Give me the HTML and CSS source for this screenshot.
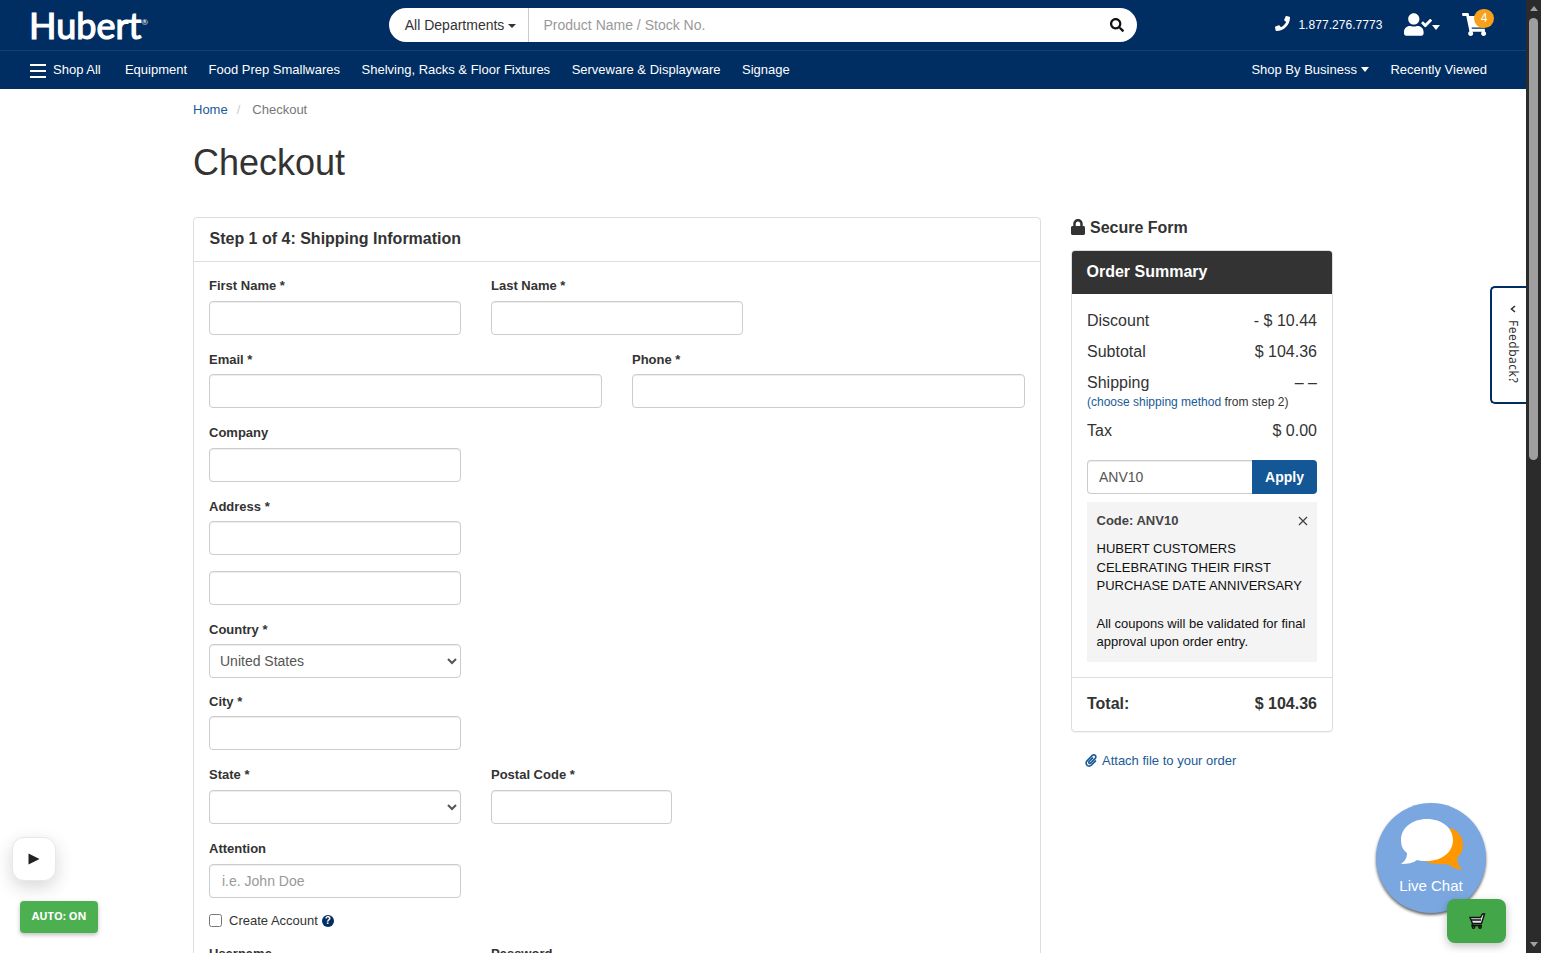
FILE: index.html
```html
<!DOCTYPE html>
<html lang="en">
<head>
    <meta charset="UTF-8">
    <meta name="viewport" content="width=device-width, initial-scale=1.0">
    <title>Checkout | Hubert</title>
    <link rel="stylesheet" href="styles.css">
</head>
<body>
    <div class="page">
        <header>
            <div class="top-bar">
                <a class="logo" href="#">Hubert<sup>®</sup></a>
                <form class="search">
                    <button type="button" class="departments">All Departments <i class="caret"></i></button>
                    <input type="text" placeholder="Product Name / Stock No.">
                    <button type="button" class="search-btn">
                        <svg viewBox="0 0 512 512" width="14" height="14"><path d="M505 442.7L405.3 343c-4.5-4.5-10.6-7-17-7H372c27.6-35.3 44-79.7 44-128C416 93.1 322.9 0 208 0S0 93.1 0 208s93.1 208 208 208c48.3 0 92.7-16.4 128-44v16.3c0 6.4 2.5 12.5 7 17l99.7 99.7c9.4 9.4 24.6 9.4 33.9 0l28.3-28.3c9.4-9.4 9.4-24.6.1-34zM208 336c-70.7 0-128-57.2-128-128 0-70.7 57.2-128 128-128 70.7 0 128 57.2 128 128 0 70.7-57.2 128-128 128z"/></svg>
                    </button>
                </form>
                <div class="tools">
                    <a class="phone" href="#">
                        <svg viewBox="0 0 512 512" width="15" height="15"><path d="M493.4 24.6l-104-24c-11.3-2.6-22.9 3.3-27.5 13.9l-48 112c-4.2 9.8-1.4 21.3 6.9 28l60.6 49.6c-36 76.7-98.9 140.5-177.2 177.2l-49.6-60.6c-6.8-8.3-18.2-11.1-28-6.9l-112 48C3.9 366.5-2 378.1.6 389.4l24 104C27.1 504.2 36.7 512 48 512c256.1 0 464-207.5 464-464 0-11.2-7.7-20.9-18.6-23.4z"/></svg>
                        <span>1.877.276.7773</span>
                    </a>
                    <a class="account" href="#">
                        <svg viewBox="0 0 640 512" width="28" height="23"><path d="M224 256c70.7 0 128-57.3 128-128S294.7 0 224 0 96 57.3 96 128s57.3 128 128 128zm89.6 32h-16.7c-22.2 10.2-46.9 16-72.9 16s-50.6-5.8-72.9-16h-16.7C60.2 288 0 348.2 0 422.4V464c0 26.5 21.5 48 48 48h352c26.5 0 48-21.5 48-48v-41.6c0-74.2-60.2-134.4-134.4-134.4zm323-128.4l-27.8-28.1c-4.6-4.7-12.1-4.7-16.8-.1l-104.8 104-45.5-45.8c-4.6-4.7-12.1-4.7-16.8-.1l-28.1 27.9c-4.7 4.6-4.7 12.1-.1 16.8l81.7 82.3c4.6 4.7 12.1 4.7 16.8.1l141.3-140.2c4.6-4.7 4.7-12.2.1-16.8z"/></svg>
                        <i class="caret"></i>
                    </a>
                    <a class="cart" href="#">
                        <svg viewBox="0 0 576 512" width="26" height="23"><path d="M528.12 301.319l47.273-208C578.806 78.301 567.391 64 551.99 64H159.208l-9.166-44.81C147.758 8.021 137.93 0 126.529 0H24C10.745 0 0 10.745 0 24v16c0 13.255 10.745 24 24 24h69.883l70.248 343.435C147.325 417.1 136 435.222 136 456c0 30.928 25.072 56 56 56s56-25.072 56-56c0-15.674-6.447-29.835-16.824-40h209.647C430.447 426.165 424 440.326 424 456c0 30.928 25.072 56 56 56s56-25.072 56-56c0-22.172-12.888-41.332-31.579-50.405l5.517-24.276c3.413-15.018-8.002-29.319-23.403-29.319H218.117l-6.545-32h293.145c11.206 0 20.92-7.754 23.403-18.681z"/></svg>
                        <span class="badge">4</span>
                    </a>
                </div>
            </div>
            <nav>
                <a class="shop-all" href="#"><span class="bars"><i></i><i></i><i></i></span>Shop All</a>
                <a href="#">Equipment</a>
                <a href="#">Food Prep Smallwares</a>
                <a href="#">Shelving, Racks &amp; Floor Fixtures</a>
                <a href="#">Serveware &amp; Displayware</a>
                <a href="#">Signage</a>
                <a class="business" href="#">Shop By Business<i class="caret"></i></a>
                <a href="#">Recently Viewed</a>
            </nav>
        </header>

        <main class="container">
            <div class="breadcrumb"><a href="#">Home</a><span class="slash">/</span><span>Checkout</span></div>
            <h1>Checkout</h1>

            <div class="columns">
                <section class="panel">
                    <h2>Step 1 of 4: Shipping Information</h2>
                    <form class="shipping">
                        <div class="row">
                            <div class="field"><label for="first">First Name *</label><input type="text" id="first"></div>
                            <div class="field"><label for="last">Last Name *</label><input type="text" id="last"></div>
                        </div>
                        <div class="row">
                            <div class="field wide"><label for="email">Email *</label><input type="text" id="email"></div>
                            <div class="field wide"><label for="phone">Phone *</label><input type="text" id="phone"></div>
                        </div>
                        <div class="row">
                            <div class="field"><label for="company">Company</label><input type="text" id="company"></div>
                        </div>
                        <div class="row">
                            <div class="field"><label for="address">Address *</label><input type="text" id="address"></div>
                        </div>
                        <div class="row address-2">
                            <div class="field"><input type="text"></div>
                        </div>
                        <div class="row country">
                            <div class="field"><label for="country">Country *</label><select id="country"><option>United States</option></select></div>
                        </div>
                        <div class="row">
                            <div class="field"><label for="city">City *</label><input type="text" id="city"></div>
                        </div>
                        <div class="row state">
                            <div class="field"><label for="state">State *</label><select id="state"><option></option></select></div>
                            <div class="field small"><label for="postal">Postal Code *</label><input type="text" id="postal"></div>
                        </div>
                        <div class="row">
                            <div class="field"><label for="attention">Attention</label><input type="text" id="attention" placeholder="i.e. John Doe"></div>
                        </div>
                        <div class="create"><input type="checkbox" id="create"><label for="create">Create Account</label><span class="help">?</span></div>
                        <div class="row">
                            <div class="field"><label for="username">Username</label><input type="text" id="username"></div>
                            <div class="field"><label for="password">Password</label><input type="password" id="password"></div>
                        </div>
                    </form>
                </section>

                <aside>
                    <div class="secure">
                        <svg viewBox="0 0 448 512" width="14" height="16"><path d="M400 224h-24v-72C376 68.2 307.8 0 224 0S72 68.2 72 152v72H48c-26.5 0-48 21.5-48 48v192c0 26.5 21.5 48 48 48h352c26.5 0 48-21.5 48-48V272c0-26.5-21.5-48-48-48zm-104 0H152v-72c0-39.7 32.3-72 72-72s72 32.3 72 72v72z"/></svg>
                        Secure Form
                    </div>
                    <div class="summary">
                        <h3>Order Summary</h3>
                        <div class="summary-body">
                            <div class="line"><span>Discount</span><span>- $ 10.44</span></div>
                            <div class="line"><span>Subtotal</span><span>$ 104.36</span></div>
                            <div class="line shipping-line"><span>Shipping</span><span>– –</span></div>
                            <p class="choose"><a href="#">(choose shipping method</a> from step 2)</p>
                            <div class="line"><span>Tax</span><span>$ 0.00</span></div>
                            <div class="coupon"><input type="text" value="ANV10"><button type="button">Apply</button></div>
                            <div class="code">
                                <div class="code-title"><span>Code: ANV10</span>
                                    <svg viewBox="0 0 10 10" width="10" height="10"><path d="M1 1l8 8M9 1l-8 8"/></svg>
                                </div>
                                <p class="promo">HUBERT CUSTOMERS<br>CELEBRATING THEIR FIRST<br>PURCHASE DATE ANNIVERSARY</p>
                                <p>All coupons will be validated for final<br>approval upon order entry.</p>
                            </div>
                        </div>
                        <div class="total"><span>Total:</span><span>$ 104.36</span></div>
                    </div>
                    <a class="attach" href="#">
                        <svg viewBox="0 0 448 512" width="12" height="13"><path d="M43.246 466.142c-58.43-60.289-57.341-157.511 1.386-217.581L254.392 34c44.316-45.332 116.351-45.336 160.671 0 43.89 44.894 43.943 117.329 0 162.276L232.214 383.128c-29.855 30.537-78.633 30.111-107.982-.998-28.275-29.97-27.368-77.473 1.452-106.953l143.743-146.835c6.182-6.314 16.312-6.422 22.626-.241l22.861 22.379c6.315 6.182 6.422 16.312.241 22.626L171.427 319.927c-4.932 5.045-5.236 13.428-.648 18.292 4.372 4.634 11.245 4.711 15.688.165l182.849-186.851c19.613-20.062 19.613-52.725-.011-72.798-19.189-19.627-49.957-19.637-69.154 0L90.39 293.295c-34.763 35.56-35.299 93.12-1.191 128.313 34.01 35.093 88.985 35.137 123.058.286l172.06-175.999c6.177-6.319 16.307-6.433 22.626-.256l22.877 22.364c6.319 6.177 6.434 16.307.256 22.626l-172.06 175.998c-59.576 60.938-155.943 60.216-214.77-.485z"/></svg>
                        Attach file to your order
                    </a>
                </aside>
            </div>
        </main>
    </div>

    <div class="scrollbar">
        <i class="arrow up"></i>
        <div class="thumb"></div>
        <i class="arrow down"></i>
    </div>

    <!-- floating widgets -->
    <div class="feedback">
        <svg viewBox="0 0 8 6" width="8" height="6"><path d="M1 1l3 3.5L7 1"/></svg>
        <span>Feedback?</span>
    </div>
    <button class="play"><svg viewBox="0 0 12 12" width="12" height="12"><path d="M.5.5v11L11.500 6z"/></svg></button>
    <button class="auto">AUTO: ON</button>
    <div class="chat">
        <svg viewBox="0 0 64 54" width="64" height="54">
            <path fill="#ff9800" d="M51 10c7 3 12 9 12 17 0 6-3 10-6 13 0 4 2 8 5 12-6-1-11-3-14-6-10 1-19 0-25-4z"/>
            <path fill="#fff" d="M27 1c15 0 26 9 26 21S42 43 27 43c-4 0-7 0-10-1-4 3-9 4-16 4 4-3 6-6 6-11C3 32 1 28 1 22 1 10 12 1 27 1z"/>
        </svg>
        <span>Live Chat</span>
    </div>
    <button class="cart-btn">
        <svg viewBox="0 0 18 18" width="18" height="18">
            <path d="M2 5.500h10.500l2-3.500h2L13.500 11.500H4.500z" fill="#e6e6e6"/>
            <path d="M3 8h10M4.500 11.500l-.5 2h10"/>
            <circle cx="5.500" cy="15" r="1.200"/><circle cx="12" cy="15" r="1.200"/>
        </svg>
    </button>
</body>
</html>
```
FILE: styles.css
```css
* {
    box-sizing: border-box;
}
body {
    font-family: "Liberation Sans", Arial, sans-serif;
    font-size: 13px;
    line-height: 18.5px;
    color: #333;
    background: #fff;
    display: flex;
    height: 953px;
    margin: 0;
    overflow: hidden;
    position: relative;
}
a {
    color: #1a5a96;
    text-decoration: none;
}
button, input, select {
    font-family: inherit;
}
h1, h2, h3, p {
    margin: 0;
}
svg {
    display: block;
    fill: currentColor;
    flex-shrink: 0;
}
.page {
    width: 1526px;
    height: 953px;
    overflow: hidden;
}
.caret {
    display: inline-block;
    border: 4px solid transparent;
    border-top-color: currentColor;
    border-bottom: 0;
}

/* header */
header {
    background: #002d62;
    height: 89px;
}
header a {
    color: #fff;
}
.top-bar {
    display: flex;
    align-items: center;
    height: 51px;
    padding: 0 32px 1px 29px;
    border-bottom: 1px solid #14406f;
}
.logo {
    width: 360px;
    font-family: Lato, sans-serif;
    font-size: 36px;
    line-height: 48px;
    padding-top: 1px;
    -webkit-text-stroke: 1.2px #fff;
}
.logo sup {
    font-size: 8px;
    line-height: 0;
    vertical-align: 14px;
    -webkit-text-stroke: 0;
}
.search {
    display: flex;
    width: 748px;
    height: 34px;
    background: #fff;
    border-radius: 17px;
    overflow: hidden;
}
.search button, .search input {
    border: 0;
    background: none;
    font-size: 14px;
}
.search .departments {
    width: 140px;
    padding: 0 0 0 4px;
    color: #333;
    border-right: 1px solid #ccc;
    white-space: nowrap;
}
.departments .caret {
    vertical-align: 2px;
}
.search input {
    flex: 1;
    padding: 0 14px 0 14.5px;
}
.search .search-btn {
    width: 40px;
    padding: 0 13px;
    color: #111;
}
::placeholder {
    color: #999;
    opacity: 1;
}
.tools {
    display: flex;
    align-items: center;
    margin-left: auto;
}
.phone {
    display: flex;
    gap: 8.5px;
    margin-right: 21.5px;
    font-size: 12px;
    letter-spacing: 0.05px;
}
.phone span {
    line-height: 18px;
}
.account {
    display: flex;
    align-items: center;
    margin-right: 22px;
}
.account .caret {
    border-width: 5px 4.500px 0;
    margin: 5px 0 0;
}
.cart {
    position: relative;
    width: 32px;
}
.badge {
    position: absolute;
    top: -4px;
    left: 12px;
    width: 20px;
    height: 19px;
    border-radius: 10px;
    background: #f9a01b;
    font-size: 12px;
    line-height: 18px;
    text-align: center;
}
nav {
    display: flex;
    align-items: center;
    gap: 21.5px;
    height: 38px;
    padding: 0 39px 0 30px;
}
.shop-all {
    display: flex;
    align-items: center;
    gap: 7px;
    margin-right: 2.7px;
}
.bars {
    display: flex;
    flex-direction: column;
    gap: 4px;
    width: 16px;
    margin-top: 1px;
}
.bars i {
    height: 2px;
    background: #fff;
}
.business {
    margin-left: auto;
}
.business .caret {
    margin-left: 4px;
    vertical-align: 2px;
    border-top-width: 5px;
}

/* content */
.container {
    width: 1140px;
    margin: 0 0 0 193px;
}
.breadcrumb {
    padding-top: 12px;
    color: #777;
}
.slash {
    padding: 0 12px 0 9px;
    color: #ccc;
}
h1 {
    margin-top: 23px;
    font-size: 36px;
    font-weight: normal;
    line-height: 40px;
}
.columns {
    display: flex;
    gap: 30px;
    margin-top: 34px;
}
.panel {
    width: 848px;
    border: 1px solid #ddd;
    border-radius: 4px 4px 0 0;
}
.panel h2 {
    height: 44px;
    padding: 0 16px 0 15.5px;
    border-bottom: 1px solid #ddd;
    font-size: 16px;
    line-height: 42px;
}
.shipping {
    padding: 15.9px 15px 0;
}
.row {
    display: flex;
    gap: 30px;
    margin-bottom: 16px;
}
.address-2 {
    margin-bottom: 15.2px;
}
.country {
    margin-bottom: 14.7px;
}
.state {
    margin-bottom: 16.3px;
}
.field {
    width: 252px;
}
.wide {
    width: 393px;
}
.small {
    width: 181px;
}
.field label {
    display: block;
    height: 18px;
    line-height: 18px;
    margin-bottom: 5.5px;
    font-weight: bold;
}
.field input, .field select, .coupon input {
    display: block;
    width: 100%;
    height: 34px;
    padding: 0 12px;
    border: 1px solid #ccc;
    border-radius: 4px;
    background: #fff;
    color: #555;
    font-size: 14px;
    box-shadow: inset 0 1px 1px rgba(0, 0, 0, 0.075);
}
.field select {
    padding: 0 0 0 6px;
}
.create {
    display: flex;
    align-items: center;
    height: 18px;
    margin: -2px 0 15.5px;
}
.create input {
    width: 13px;
    height: 13px;
    margin: 0 7px 0 0;
}
.create label {
    padding-top: 1px;
}
.help {
    width: 12px;
    height: 12px;
    margin-left: 4px;
    border-radius: 50%;
    background: #002d62;
    color: #fff;
    font-size: 10px;
    font-weight: bold;
    line-height: 12px;
    text-align: center;
}

/* order summary */
aside {
    width: 262px;
}
.secure {
    display: flex;
    gap: 5px;
    height: 33px;
    padding-top: 2px;
    font-size: 16px;
    font-weight: bold;
}
.summary {
    border: 1px solid #ddd;
    border-radius: 4px;
    box-shadow: 0 1px 1px rgba(0, 0, 0, 0.05);
}
.summary h3 {
    height: 43px;
    padding-left: 14.5px;
    border-radius: 3px 3px 0 0;
    background: #333;
    color: #fff;
    font-size: 16px;
    line-height: 41px;
}
.summary-body {
    padding: 15px;
}
.line {
    display: flex;
    justify-content: space-between;
    height: 23px;
    margin-bottom: 8px;
    font-size: 16px;
    line-height: 23px;
}
.shipping-line {
    margin-bottom: 0;
}
.choose {
    margin: 0 0 8px;
    font-size: 12px;
    line-height: 17px;
}
.coupon {
    display: flex;
    margin: 18px 0 8px;
}
.coupon input {
    flex: 1;
    min-width: 0;
    padding-left: 11px;
    border-right: 0;
    border-radius: 4px 0 0 4px;
}
.coupon button {
    width: 65px;
    border: 0;
    border-radius: 0 4px 4px 0;
    background: #135797;
    color: #fff;
    font-size: 14px;
    font-weight: bold;
}
.code {
    height: 160px;
    padding: 10px 9px 0 9.5px;
    background: #f4f4f4;
    color: #111;
    line-height: 18.57px;
}
.code p {
    white-space: nowrap;
}
.code-title {
    display: flex;
    align-items: center;
    justify-content: space-between;
    margin-bottom: 10.3px;
    color: #444;
    font-weight: bold;
}
.code-title svg {
    fill: none;
    stroke: #444;
    stroke-width: 1.3;
}
.code .promo {
    margin-bottom: 18.7px;
}
.total {
    display: flex;
    justify-content: space-between;
    height: 54px;
    padding: 0 15px;
    border-top: 1px solid #ddd;
    font-size: 16px;
    font-weight: bold;
    line-height: 51px;
}
.attach {
    display: flex;
    align-items: center;
    gap: 5px;
    margin: 20px 0 0 14px;
}

/* scrollbar */
.scrollbar {
    display: flex;
    flex-direction: column;
    align-items: center;
    width: 15px;
    height: 953px;
    padding: 6px 0;
    background: #2b2b2b;
}
.arrow {
    border: 4px solid transparent;
}
.up {
    border-top: 0;
    border-bottom: 5px solid #a0a0a0;
}
.down {
    margin-top: auto;
    border-bottom: 0;
    border-top: 5px solid #a0a0a0;
}
.thumb {
    width: 9px;
    height: 442px;
    margin-top: 7px;
    border-radius: 5px;
    background: #9f9f9f;
}

/* floating widgets */
.feedback {
    position: absolute;
    top: 286px;
    left: 1490px;
    display: flex;
    flex-direction: column;
    align-items: center;
    width: 36px;
    height: 118px;
    padding: 18px 0 0 7px;
    border: 2px solid #002d62;
    border-right: 0;
    border-radius: 5px 0 0 5px;
    background: #fff;
}
.feedback svg {
    fill: none;
    stroke: #333;
    stroke-width: 1.6;
    transform: rotate(90deg);
}
.feedback span {
    margin-top: 8px;
    writing-mode: vertical-rl;
    font-family: "Noto Sans", sans-serif;
    font-size: 12px;
    letter-spacing: 0.5px;
}
.play {
    position: absolute;
    top: 837px;
    left: 12px;
    display: flex;
    align-items: center;
    justify-content: center;
    width: 44px;
    height: 44px;
    padding: 0;
    border: 1px solid #e8e8e8;
    border-radius: 12px;
    background: #fff;
    color: #222;
    box-shadow: 0 6px 18px rgba(0, 0, 0, 0.16);
}
.auto {
    position: absolute;
    top: 901px;
    left: 20px;
    width: 78px;
    height: 32px;
    padding: 0 0 3px;
    border: 0;
    border-radius: 4px;
    background: #4caf50;
    color: #fff;
    font-family: "Open Sans", sans-serif;
    font-size: 11px;
    font-weight: bold;
    box-shadow: 0 2px 4px rgba(0, 0, 0, 0.25);
}
.chat {
    position: absolute;
    top: 803px;
    left: 1376px;
    display: flex;
    flex-direction: column;
    align-items: center;
    width: 110px;
    height: 110px;
    padding-top: 15px;
    border-radius: 50%;
    background: #7ba7e1;
    color: #fff;
    font-size: 15px;
    box-shadow: 0 2px 3px rgba(0, 0, 0, 0.6);
}
.chat svg {
    margin-left: 2px;
}
.chat span {
    margin-top: 5px;
}
.cart-btn {
    position: absolute;
    top: 899px;
    left: 1447px;
    display: flex;
    align-items: center;
    justify-content: center;
    width: 59px;
    height: 44px;
    border: 0;
    border-radius: 8px;
    background: #43a649;
    box-shadow: 0 3px 8px rgba(0, 0, 0, 0.25);
}
.cart-btn svg {
    fill: none;
    stroke: #111;
    stroke-width: 1.4;
}
```
